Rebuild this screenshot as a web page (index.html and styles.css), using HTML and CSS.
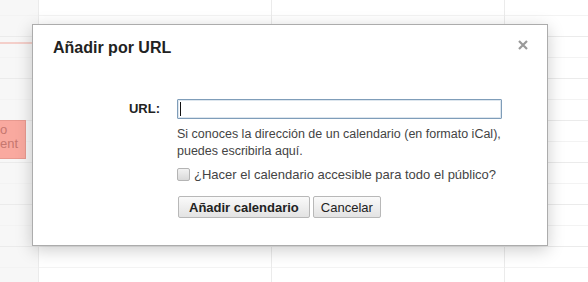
FILE: index.html
```html
<!DOCTYPE html>
<html lang="es">
<head>
  <meta charset="UTF-8">
  <title>Añadir por URL</title>
  <link rel="stylesheet" href="styles.css">
</head>
<body>

  <div class="calendar">
    <div class="col col-first">
      <div class="now-line"></div>
      <div class="event">o<br>ent</div>
    </div>
    <div class="col col-wide"></div>
    <div class="col col-wide"></div>
    <div class="col col-last"></div>
  </div>

  <div class="dialog">
    <div class="dialog-title">Añadir por URL</div>
    <span class="close">
      <svg width="10" height="10" viewBox="0 0 10 10"><path d="M1 1L9 9M9 1L1 9" stroke="#999" stroke-width="2.2"/></svg>
    </span>

    <div class="form">
      <div class="row">
        <label class="label">URL:</label>
        <div class="field">
          <div class="url-box">
            <input type="text" class="url-input">
            <span class="caret"></span>
          </div>
          <p class="help">Si conoces la dirección de un calendario (en formato iCal),<br>puedes escribirla aquí.</p>
          <label class="check-row">
            <input type="checkbox" class="check">
            <span>¿Hacer el calendario accesible para todo el público?</span>
          </label>
          <div class="buttons">
            <button class="btn btn-main">Añadir calendario</button>
            <button class="btn">Cancelar</button>
          </div>
        </div>
      </div>
    </div>
  </div>

</body>
</html>
```

FILE: styles.css
```css
body {
  margin: 0;
  font-family: 'Liberation Sans', Arial, sans-serif;
  background: #fff;
  color: #222;
  overflow: hidden;
}

.calendar {
  display: flex;
  height: 282px;
}
.col {
  position: relative;
  border-right: 1px solid #ebebeb;
  background:
    repeating-linear-gradient(to bottom,
      transparent 0, transparent 15px, #f3f3f3 15px, #f3f3f3 16px,
      transparent 16px, transparent 36px, #ebebeb 36px, #ebebeb 37px,
      transparent 37px, transparent 42px);
}
.col-first {
  width: 38px;
  background-color: #f7f7f7;
}
.col-wide {
  width: 232px;
}
.col-last {
  flex: 1;
  border-right: none;
}
.now-line {
  position: absolute;
  top: 42px;
  left: 0;
  right: 0;
  height: 2px;
  background: #f4cfca;
}
.event {
  position: absolute;
  top: 120px;
  left: -1px;
  width: 27px;
  height: 39px;
  background: #f9a99f;
  border: 1px solid #e89a90;
  color: #c6776f;
  font-size: 13px;
  line-height: 14px;
  padding-top: 2px;
  box-sizing: border-box;
  overflow: hidden;
}

.dialog {
  position: absolute;
  top: 24px;
  left: 32px;
  width: 514px;
  height: 220px;
  background: #fff;
  border: 1px solid #acacac;
  box-shadow: 0 4px 16px rgba(0, 0, 0, 0.2);
}
.dialog-title {
  padding: 14px 20px 0;
  font-size: 16px;
  font-weight: bold;
  line-height: 18px;
  color: #222;
}
.close {
  position: absolute;
  top: 15px;
  right: 19px;
  line-height: 0;
}

.form {
  margin-top: 42px;
}
.row {
  display: flex;
}
.label {
  width: 127px;
  text-align: right;
  font-size: 13px;
  font-weight: bold;
  line-height: 20px;
  color: #222;
}
.field {
  margin-left: 17px;
  font-size: 13px;
  color: #444;
}
.url-box {
  position: relative;
  width: 325px;
}
.url-input {
  display: block;
  width: 325px;
  height: 20px;
  box-sizing: border-box;
  margin: 0;
  padding: 0 3px;
  border: 1px solid #7f9db9;
  border-radius: 1px;
  outline: none;
  box-shadow: inset 0 0 0 1px #dde6ee;
  font-family: inherit;
  font-size: 13px;
}
.caret {
  position: absolute;
  top: 3px;
  left: 3px;
  width: 1px;
  height: 14px;
  background: #111;
}
.help {
  margin: 7px 0 0;
  font-size: 12.5px;
  line-height: 17px;
  white-space: nowrap;
}
.check-row {
  display: flex;
  align-items: center;
  margin-top: 6px;
  line-height: 17px;
}
.check {
  appearance: none;
  -webkit-appearance: none;
  width: 13px;
  height: 13px;
  margin: 0 4px 0 0;
  border: 1px solid #b4b4b4;
  border-radius: 2px;
  background: linear-gradient(#f2f2f2, #d9d9d9);
  box-sizing: border-box;
}
.buttons {
  display: flex;
  gap: 3px;
  margin-top: 13px;
  margin-left: 1px;
}
.btn {
  height: 22px;
  padding: 0 7px;
  border: 1px solid #b8b8b8;
  border-radius: 2px;
  background: linear-gradient(#fafafa, #e3e3e3);
  font-family: inherit;
  font-size: 13px;
  color: #222;
}
.btn-main {
  font-weight: bold;
  padding: 0 10px;
}
```
